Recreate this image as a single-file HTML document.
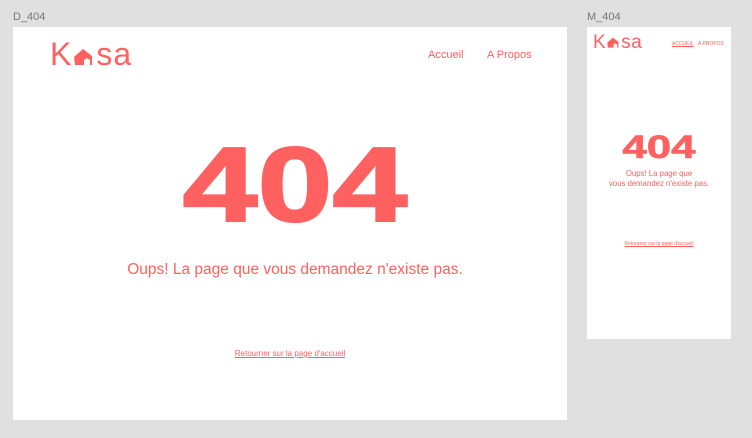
<!DOCTYPE html>
<html><head><meta charset="utf-8"><style>
body{margin:0;width:752px;height:438px;background:#e0e0e0;position:relative;overflow:hidden;font-family:"Liberation Sans",sans-serif;color:#ff6060}
.a{position:absolute}
.lbl{color:#777;font-size:11px}
.fr{background:#fff}
.logo{font-size:30px;letter-spacing:1px;white-space:nowrap}
.big{font-weight:bold;text-align:center;transform-origin:center;-webkit-text-stroke:2px #ff6060}
</style></head><body>
<div class="a lbl" style="left:13px;top:11px">D_404</div>
<div class="a lbl" style="left:587px;top:11px">M_404</div>
<div class="a fr" style="left:13px;top:27px;width:554px;height:393px"></div>
<div class="a fr" style="left:587px;top:27px;width:144px;height:312px"></div>

<div class="a logo" style="left:50px;top:36px;font-size:32px">K<svg width="24" height="22" viewBox="0 0 24 22" style="vertical-align:-2px"><path d="M2 12 L11 4 L20 11 L20 20 L3 20 Z" fill="#ff6060"/><path d="M12 20 L12 15 L15 13 L18 15 L18 20" fill="#fff"/></svg>sa</div>
<div class="a" style="left:428px;top:49px;font-size:11px">Accueil</div>
<div class="a" style="left:487px;top:49px;font-size:11px">A Propos</div>
<div class="a big" style="left:145px;top:122px;width:300px;font-size:106px;line-height:126px;transform:scaleX(1.27)">404</div>
<div class="a" style="left:18px;top:261px;width:554px;text-align:center;font-size:15.5px">Oups! La page que vous demandez n'existe pas.</div>
<div class="a" style="left:13px;top:349px;width:554px;text-align:center;font-size:8px;text-decoration:underline">Retourner sur la page d'accueil</div>

<div class="a logo" style="left:593px;top:32px;font-size:19px;letter-spacing:.5px">K<svg width="15" height="14" viewBox="0 0 24 22" style="vertical-align:-1px"><path d="M2 12 L11 4 L20 11 L20 20 L3 20 Z" fill="#ff6060"/><path d="M12 20 L12 15 L15 13 L18 15 L18 20" fill="#fff"/></svg>sa</div>
<div class="a" style="left:672px;top:41px;font-size:5px;text-decoration:underline">ACCUEIL</div>
<div class="a" style="left:698px;top:41px;font-size:5px">A PROPOS</div>
<div class="a big" style="left:587px;top:128px;width:144px;font-size:32px;line-height:38px;transform:scaleX(1.37);-webkit-text-stroke:.6px #ff6060">404</div>
<div class="a" style="left:587px;top:169px;width:144px;text-align:center;font-size:7.8px;line-height:10px">Oups! La page que<br>vous demandez n'existe pas.</div>
<div class="a" style="left:587px;top:241px;width:144px;text-align:center;font-size:5px;text-decoration:underline">Retourner sur la page d'accueil</div>
</body></html>
